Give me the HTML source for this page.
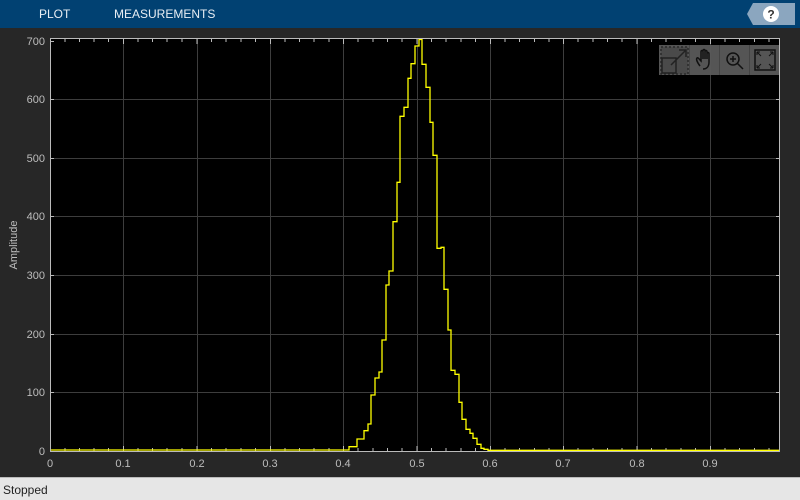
<!DOCTYPE html>
<html><head><style>
body{margin:0;width:800px;height:500px;overflow:hidden;background:#272727;font-family:"Liberation Sans",sans-serif;position:relative}
.top{position:absolute;left:0;top:0;width:800px;height:28px;background:#014172}
.top span{position:absolute;top:7px;color:#e8eef4;font-size:12px}
.status{position:absolute;left:0;top:477px;width:800px;height:23px;background:#e6e6e6;border-top:1px solid #bbb;box-sizing:border-box}
.status span{position:absolute;left:3px;top:5px;font-size:12px;color:#222}
</style></head><body>
<div class="top"><span style="left:39px">PLOT</span><span style="left:114px">MEASUREMENTS</span>
<svg style="position:absolute;left:745px;top:3px" width="50" height="22"><path d="M8 0H50V22H8L2 11Z" fill="#8ba6bf"/><circle cx="26" cy="11" r="8" fill="#fff"/><text x="26" y="15.5" font-size="12" font-weight="bold" text-anchor="middle" fill="#333" font-family="Liberation Sans">?</text></svg>
</div>
<svg style="position:absolute;left:0;top:28px" width="800" height="449" font-family="Liberation Sans" font-size="11" fill="#bdbdbd">
<g transform="translate(0,-28)">
<rect x="50" y="39" width="730" height="412" fill="#000"/>
<g stroke="#3d3d3d" stroke-width="1">
<path d="M123.5 39V451M197.5 39V451M270.5 39V451M343.5 39V451M417.5 39V451M490.5 39V451M563.5 39V451M637.5 39V451M710.5 39V451"/>
<path d="M50 392.5H780M50 334.5H780M50 275.5H780M50 216.5H780M50 158.5H780M50 99.5H780"/>
</g>
<g stroke="#bbb" stroke-width="1" id="tk">
<path d="M65 39v3M79.5 39v3M94 39v3M108.5 39v3M123.5 39v5M138 39v3M152.5 39v3M167 39v3M182 39v3M197 39v5M211.5 39v3M226 39v3M241 39v3M255.5 39v3M270.5 39v5M285 39v3M299.5 39v3M314 39v3M329 39v3M343.5 39v5M358 39v3M373 39v3M387.5 39v3M402 39v3M417 39v5M431.5 39v3M446 39v3M461 39v3M475.5 39v3M490.5 39v5M505 39v3M519.5 39v3M534.5 39v3M549 39v3M563.5 39v5M578 39v3M593 39v3M607.5 39v3M622 39v3M637 39v5M651.5 39v3M666 39v3M681 39v3M695.5 39v3M710.5 39v5M725 39v3M739.5 39v3M754.5 39v3M769 39v3"/>
</g>
<use href="#tk" transform="translate(0,490) scale(1,-1)"/>
<g stroke="#bbb"><path d="M50 392.5h4M50 334.5h4M50 275.5h4M50 216.5h4M50 158.5h4M50 99.5h4M50 41.5h4M780 392.5h-4M780 334.5h-4M780 275.5h-4M780 216.5h-4M780 158.5h-4M780 99.5h-4"/></g>
<path d="M50 450H343H349V446.7H357V439H364V430.7H368V424H371V395H375V378H379V372H382V340H386V285H389V271H393V221.7H397V182.3H400V116.3H404V107.3H408V78.3H411V63.7H415V46H419V39.5H422V64.3H426V87.3H430V122.3H433V155.3H437V248.3H441V247.3H444V289.3H448V330H451V370.3H455V374.3H459V402.3H462V419.3H466V429.3H470V433.3H473V438.3H477V444.3H481V448.3H484V449.3H488V450.3H780" fill="none" stroke="#ffff00" stroke-width="1.3"/>
<rect x="50.5" y="38.5" width="729" height="413" fill="none" stroke="#bbb"/>
<text x="50" y="467" text-anchor="middle">0</text>
<text x="123" y="467" text-anchor="middle">0.1</text><text x="197" y="467" text-anchor="middle">0.2</text><text x="270" y="467" text-anchor="middle">0.3</text><text x="343" y="467" text-anchor="middle">0.4</text><text x="417" y="467" text-anchor="middle">0.5</text><text x="490" y="467" text-anchor="middle">0.6</text><text x="563" y="467" text-anchor="middle">0.7</text><text x="637" y="467" text-anchor="middle">0.8</text><text x="710" y="467" text-anchor="middle">0.9</text>
<g text-anchor="end"><text x="45" y="455">0</text><text x="45" y="396">100</text><text x="45" y="338">200</text><text x="45" y="279">300</text><text x="45" y="220">400</text><text x="45" y="162">500</text><text x="45" y="103">600</text><text x="45" y="45">700</text></g>
<text transform="translate(17,245) rotate(-90)" text-anchor="middle">Amplitude</text>
<rect x="659" y="45" width="120" height="30" fill="#5a5a5a" fill-opacity="0.95"/>
<g stroke="#2a2a2a" fill="none" stroke-width="1.5">
<rect x="661" y="47" width="27" height="27" stroke-dasharray="2,2" fill="#4a4a4a"/>
<path d="M662 73V58H676V73Z M671 65L686 50M679 50H686V57" stroke="#222"/>
<path d="M689.5 45V75M719.5 45V75M749.5 45V75" stroke="#444" stroke-width="1"/>
<path d="M700 66C697 62 696 59 697 58C698 57 700 60 701 61V52C701 50 703 50 703 52V59M703 51C703 49 705 49 705 51V59M705 52C705 50 707 50 707 52V59M707 54C707 52 709 52 709 54V62C709 66 707 69 703 69" stroke="#111"/>
<circle cx="733" cy="59" r="6" stroke="#111"/><path d="M737 63L743 69M730 59H736M733 56V62" stroke="#111"/>
<rect x="755" y="50" width="20" height="20" stroke="#111"/><path d="M757 52L761 56M757 52V55M757 52H760M773 52L769 56M773 52V55M773 52H770M757 68L761 64M757 68V65M757 68H760M773 68L769 64M773 68V65M773 68H770" stroke="#111" stroke-width="1"/>
</g>
</g></svg>
<div class="status"><span>Stopped</span></div>
</body></html>
